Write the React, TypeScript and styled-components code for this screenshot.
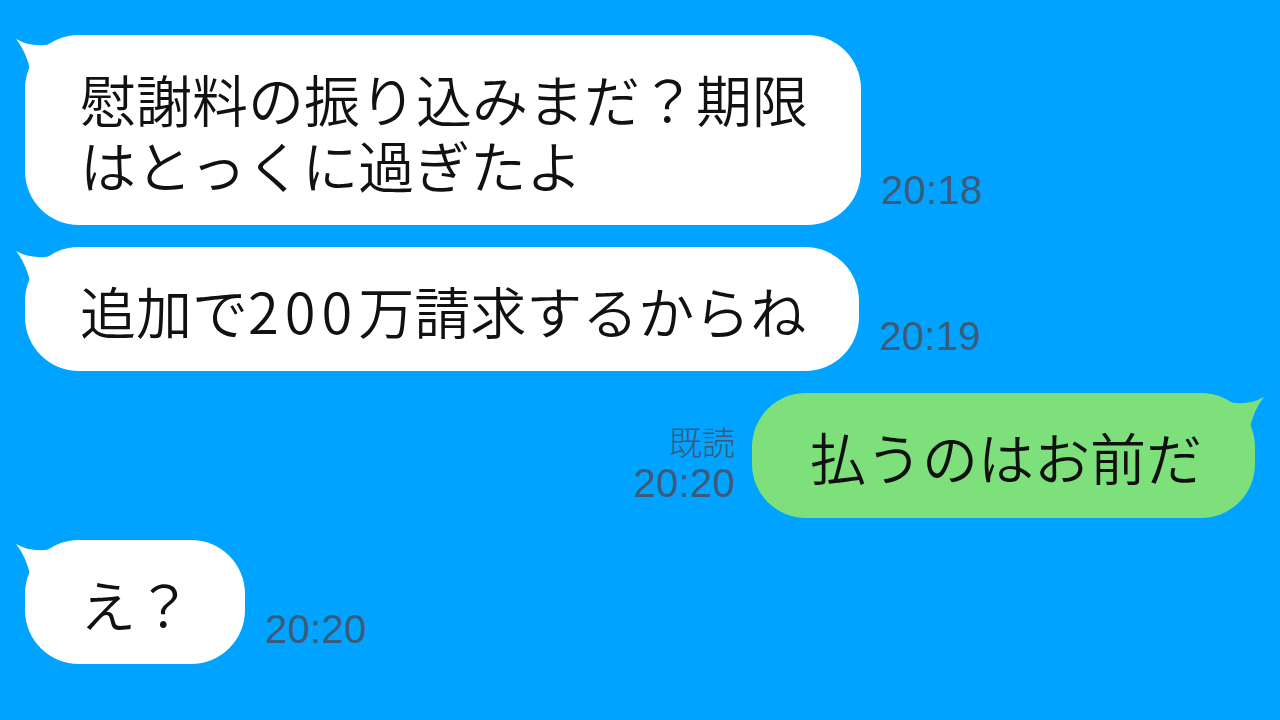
import styled, { createGlobalStyle } from "styled-components";

const GlobalStyle = createGlobalStyle`
  html, body {
    margin: 0;
    padding: 0;
  }
  body {
    font-family: "Noto Sans CJK JP", "Noto Sans", sans-serif;
  }
`;

const Screen = styled.div`
  width: 1280px;
  height: 720px;
  box-sizing: border-box;
  background: #00a3ff;
  padding: 35px 25px 0 25px;
  display: flex;
  flex-direction: column;
  gap: 22px;
  overflow: hidden;
`;

const Row = styled.div<{ mine?: boolean }>`
  display: flex;
  align-items: flex-end;
  justify-content: ${(p) => (p.mine ? "flex-end" : "flex-start")};
  gap: ${(p) => (p.mine ? "17px" : "20px")};
`;

const Bubble = styled.div<{ mine?: boolean }>`
  position: relative;
  background: ${(p) => (p.mine ? "#7ee07a" : "#ffffff")};
  color: #111;
  font-family: "Noto Sans CJK JP", sans-serif;
  font-weight: 350;
  font-size: 56px;
  line-height: 64px;
  padding: ${(p) => (p.mine ? "31px 53px 30px 58px" : "31px 53px 29px 55px")};
  border-radius: 54px;
  white-space: nowrap;
`;

const Line = styled.div`
  & + & {
    margin-top: 2px;
  }
`;

const Digits = styled.span`
  letter-spacing: 6px;
`;

const Tail = styled.svg<{ mine?: boolean }>`
  position: absolute;
  top: 2px;
  width: 50px;
  height: 50px;
  ${(p) =>
    p.mine
      ? "right: -11px; transform: scaleX(-1);"
      : "left: -11px;"}
`;

const Meta = styled.div<{ mine?: boolean }>`
  display: flex;
  flex-direction: column;
  align-items: ${(p) => (p.mine ? "flex-end" : "flex-start")};
  margin-bottom: 15px;
  color: #3d5b78;
`;

const Read = styled.span`
  font-family: "Noto Sans CJK JP", sans-serif;
  font-weight: 300;
  font-size: 33px;
  line-height: 36px;
  margin-bottom: 4px;
`;

const Time = styled.span`
  font-family: "Liberation Sans", Arial, sans-serif;
  font-size: 40px;
  line-height: 40px;
  letter-spacing: 0.3px;
`;

function BubbleTail({ mine }: { mine?: boolean }) {
  return (
    <Tail mine={mine} viewBox="0 0 50 50">
      <path
        d="M2,2 Q18,11 37,7 L44,44 L17,36 Q12,14 2,2 Z"
        fill={mine ? "#7ee07a" : "#ffffff"}
      />
    </Tail>
  );
}

// split digit runs so they can be spaced a little wider
function renderLine(text: string) {
  return text.split(/(\d+)/).map((part, i) =>
    /^\d+$/.test(part) ? <Digits key={i}>{part}</Digits> : part
  );
}

interface Message {
  lines: string[];
  time: string;
  mine?: boolean;
  read?: boolean;
}

const messages: Message[] = [
  { lines: ["慰謝料の振り込みまだ？期限", "はとっくに過ぎたよ"], time: "20:18" },
  { lines: ["追加で200万請求するからね"], time: "20:19" },
  { lines: ["払うのはお前だ"], time: "20:20", mine: true, read: true },
  { lines: ["え？"], time: "20:20" },
];

export default function App() {
  return (
    <>
      <GlobalStyle />
      <Screen>
        {messages.map((m, i) => (
          <Row key={i} mine={m.mine}>
            {m.mine && (
              <Meta mine>
                {m.read && <Read>既読</Read>}
                <Time>{m.time}</Time>
              </Meta>
            )}
            <Bubble mine={m.mine}>
              <BubbleTail mine={m.mine} />
              {m.lines.map((l, j) => (
                <Line key={j}>{renderLine(l)}</Line>
              ))}
            </Bubble>
            {!m.mine && (
              <Meta>
                <Time>{m.time}</Time>
              </Meta>
            )}
          </Row>
        ))}
      </Screen>
    </>
  );
}
